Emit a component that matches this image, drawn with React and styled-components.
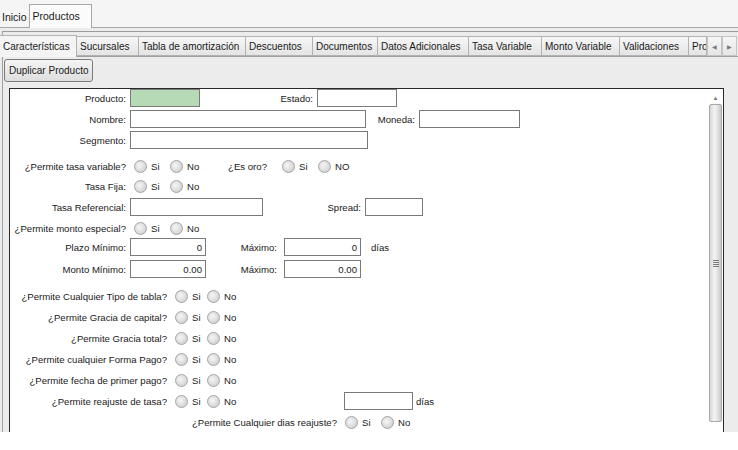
import styled, { createGlobalStyle } from 'styled-components'

const GlobalStyle = createGlobalStyle`
    html, body {
        margin: 0;
        padding: 0;
        background: #ffffff;
    }
    body {
        font-family: "Liberation Sans", Arial, sans-serif;
        font-size: 10px;
        color: #1a1a1a;
    }
`

const Window = styled.div`
    width: 738px;
    height: 432px;
    display: flex;
    flex-direction: column;
    background: #ececec;
    overflow: hidden;
`
const TopBar = styled.div`
    height: 27px;
    display: flex;
    align-items: flex-end;
    background: #f5f5f5;
    border-bottom: 1px solid #a8a8a8;
`
const TopTab = styled.div`
    height: ${props => props.$active ? '23px' : '19px'};
    line-height: ${props => props.$active ? '22px' : '19px'};
    padding: 0 ${props => props.$active ? '11px' : '2px'} 0 ${props => props.$active ? '3px' : '2px'};
    background: ${props => props.$active ? '#fbfbfb' : 'transparent'};
    border: ${props => props.$active ? '1px solid #a8a8a8' : 'none'};
    border-bottom: none;
    margin-bottom: ${props => props.$active ? '-1px' : '0'};
    font-size: 10.5px;
`
const OuterPanel = styled.div`
    flex: 1;
    display: flex;
    flex-direction: column;
    margin-top: 3px;
    border-top: 1px solid #9a9a9a;
    border-left: 1px solid #a0a0a0;
    margin-left: 2px;
    min-height: 0;
`
const InnerTabs = styled.div`
    height: 22px;
    margin-top: 2px;
    margin-left: -2px;
    display: flex;
    align-items: flex-end;
    border-bottom: 1px solid #a0a0a0;
`
const Tab = styled.div`
    flex-shrink: 0;
    box-sizing: border-box;
    width: ${props => props.$w}px;
    height: ${props => props.$active ? '22px' : '20px'};
    line-height: ${props => props.$active ? '21px' : '19px'};
    padding-left: 3px;
    white-space: nowrap;
    overflow: hidden;
    border: 1px solid #b2b2b2;
    border-left: ${props => props.$first ? 'none' : '1px solid #b2b2b2'};
    border-bottom: ${props => props.$active ? 'none' : '1px solid #b2b2b2'};
    margin-bottom: ${props => props.$active ? '-1px' : '0'};
    margin-left: -1px;
    background: ${props => props.$active ? '#f4f4f4' : 'linear-gradient(#f7f7f7, #e4e4e4)'};
`
const TabArrows = styled.div`
    display: flex;
    height: 20px;
`
const ArrowBtn = styled.div`
    width: 15px;
    box-sizing: border-box;
    border: 1px solid #c4c4c4;
    background: linear-gradient(#f6f6f6, #e6e6e6);
    display: flex;
    align-items: center;
    justify-content: center;
    color: #777;
    font-size: 6px;
`
const TabBody = styled.div`
    flex: 1;
    display: flex;
    flex-direction: column;
    padding: 2px 0 0 1px;
    min-height: 0;
`
const Button = styled.button`
    align-self: flex-start;
    height: 23px;
    padding: 0 4px;
    font-family: inherit;
    font-size: 10px;
    color: #1a1a1a;
    border: 1px solid #7c7c7c;
    border-radius: 3px;
    background: linear-gradient(#f4f4f4, #dedede);
`
const Panel = styled.div`
    flex: 1;
    display: flex;
    margin: 6px 14px 0 5px;
    border: 1px solid #2a2a2a;
    border-bottom: none;
    background: #ffffff;
    min-height: 0;
`
const Form = styled.div`
    flex: 1;
    display: flex;
    flex-direction: column;
    font-size: 9.6px;
`
const Row = styled.div`
    display: flex;
    align-items: center;
    height: 18px;
    margin-top: ${props => props.$mt || 0}px;
    white-space: nowrap;
`
const Label = styled.div`
    flex-shrink: 0;
    box-sizing: border-box;
    width: ${props => props.$w}px;
    padding-right: ${props => props.$pr ?? 4}px;
    text-align: right;
    white-space: nowrap;
    direction: rtl;
`
const LabelText = styled.span`
    direction: ltr;
    unicode-bidi: isolate;
`
const Input = styled.div`
    flex-shrink: 0;
    box-sizing: border-box;
    width: ${props => props.$w}px;
    height: 18px;
    line-height: 17px;
    padding-right: 3px;
    text-align: right;
    border: 1px solid #7a7a7a;
    background: ${props => props.$green ? '#b5dab5' : '#ffffff'};
`
const Unit = styled.span`
    margin-left: ${props => props.$ml}px;
`
const Option = styled.div`
    flex-shrink: 0;
    width: ${props => props.$w || 36}px;
    display: flex;
    align-items: center;
    gap: 4px;
    margin-left: ${props => props.$first ? '4px' : '0'};
`
const Dot = styled.span`
    width: 11px;
    height: 11px;
    border-radius: 50%;
    border: 1px solid #a4a4a4;
    background: radial-gradient(circle at 40% 40%, #f6f6f6 0%, #dadada 60%, #c4c4c4 100%);
`
const Spacer = styled.div`
    width: ${props => props.$w}px;
    flex-shrink: 0;
`
const Scrollbar = styled.div`
    width: 15px;
    display: flex;
    flex-direction: column;
    align-items: center;
    padding-top: 2px;
    box-sizing: border-box;
`
const ScrollUp = styled.div`
    height: 13px;
    width: 13px;
    display: flex;
    align-items: center;
    justify-content: center;
    color: #777;
    font-size: 6px;
`
const Thumb = styled.div`
    flex: 1;
    width: 13px;
    box-sizing: border-box;
    margin-bottom: 10px;
    border: 1px solid #a8a8a8;
    border-radius: 2px;
    background: linear-gradient(90deg, #d6d6d6, #f4f4f4 40%, #e2e2e2 70%, #c8c8c8);
    display: flex;
    align-items: center;
    justify-content: center;
`
const Grip = styled.div`
    width: 6px;
    height: 7px;
    background: repeating-linear-gradient(#7a7a7a 0 1px, transparent 1px 2px);
`

const Radios = ({ labels = ['Si', 'No'], w }) => (
    <>
        {labels.map((l, i) => (
            <Option key={l + i} $first={i === 0} $w={w}>
                <Dot />
                <span>{l}</span>
            </Option>
        ))}
    </>
)

const tabs = [
    ['Características', 77],
    ['Sucursales', 63],
    ['Tabla de amortización', 108],
    ['Descuentos', 68],
    ['Documentos', 66],
    ['Datos Adicionales', 92],
    ['Tasa Variable', 74],
    ['Monto Variable', 79],
    ['Validaciones', 70],
    ['Pro', 19],
]

const permite = [
    ['¿Permite Cualquier Tipo de tabla?', 9],
    ['¿Permite Gracia de capital?', 3],
    ['¿Permite Gracia total?', 3],
    ['¿Permite cualquier Forma Pago?', 3],
    ['¿Permite fecha de primer pago?', 3],
]

const App = () => {
    return (
        <Window>
            <GlobalStyle />
            <TopBar>
                <TopTab>Inicio</TopTab>
                <TopTab $active>Productos</TopTab>
            </TopBar>
            <OuterPanel>
                <InnerTabs>
                    {tabs.map(([t, w], i) => (
                        <Tab key={t} $w={w} $active={i === 0} $first={i === 0}>{t}</Tab>
                    ))}
                    <TabArrows>
                        <ArrowBtn>◀</ArrowBtn>
                        <ArrowBtn>▶</ArrowBtn>
                    </TabArrows>
                </InnerTabs>
                <TabBody>
                    <Button>Duplicar Producto</Button>
                    <Panel>
                        <Form>
                            <Row>
                                <Label $w={120}><LabelText>Producto:</LabelText></Label>
                                <Input $w={70} $green />
                                <Label $w={117}><LabelText>Estado:</LabelText></Label>
                                <Input $w={80} />
                            </Row>
                            <Row $mt={3}>
                                <Label $w={120}><LabelText>Nombre:</LabelText></Label>
                                <Input $w={236} />
                                <Label $w={53}><LabelText>Moneda:</LabelText></Label>
                                <Input $w={101} />
                            </Row>
                            <Row $mt={3}>
                                <Label $w={120}><LabelText>Segmento:</LabelText></Label>
                                <Input $w={238} />
                            </Row>
                            <Row $mt={8}>
                                <Label $w={120}><LabelText>¿Permite tasa variable?</LabelText></Label>
                                <Radios />
                                <Label $w={72} $pr={11}><LabelText>¿Es oro?</LabelText></Label>
                                <Radios labels={['Si', 'NO']} />
                            </Row>
                            <Row $mt={2}>
                                <Label $w={120}><LabelText>Tasa Fija:</LabelText></Label>
                                <Radios />
                            </Row>
                            <Row $mt={3}>
                                <Label $w={120}><LabelText>Tasa Referencial:</LabelText></Label>
                                <Input $w={133} />
                                <Label $w={102}><LabelText>Spread:</LabelText></Label>
                                <Input $w={58} />
                            </Row>
                            <Row $mt={3}>
                                <Label $w={120}><LabelText>¿Permite monto especial?</LabelText></Label>
                                <Radios />
                            </Row>
                            <Row $mt={1}>
                                <Label $w={120}><LabelText>Plazo Mínimo:</LabelText></Label>
                                <Input $w={76}>0</Input>
                                <Label $w={78} $pr={7}><LabelText>Máximo:</LabelText></Label>
                                <Input $w={77}>0</Input>
                                <Unit $ml={10}>días</Unit>
                            </Row>
                            <Row $mt={4}>
                                <Label $w={120}><LabelText>Monto Mínimo:</LabelText></Label>
                                <Input $w={76}>0.00</Input>
                                <Label $w={78} $pr={7}><LabelText>Máximo:</LabelText></Label>
                                <Input $w={77}>0.00</Input>
                            </Row>
                            {permite.map(([q, mt]) => (
                                <Row key={q} $mt={mt}>
                                    <Label $w={161}><LabelText>{q}</LabelText></Label>
                                    <Radios w={32} />
                                </Row>
                            ))}
                            <Row $mt={3}>
                                <Label $w={161}><LabelText>¿Permite reajuste de tasa?</LabelText></Label>
                                <Radios w={32} />
                                <Spacer $w={105} />
                                <Input $w={69} />
                                <Unit $ml={3}>días</Unit>
                            </Row>
                            <Row $mt={3}>
                                <Label $w={331}><LabelText>¿Permite Cualquier dias reajuste?</LabelText></Label>
                                <Radios />
                            </Row>
                        </Form>
                        <Scrollbar>
                            <ScrollUp>▲</ScrollUp>
                            <Thumb><Grip /></Thumb>
                        </Scrollbar>
                    </Panel>
                </TabBody>
            </OuterPanel>
        </Window>
    )
}

export default App
